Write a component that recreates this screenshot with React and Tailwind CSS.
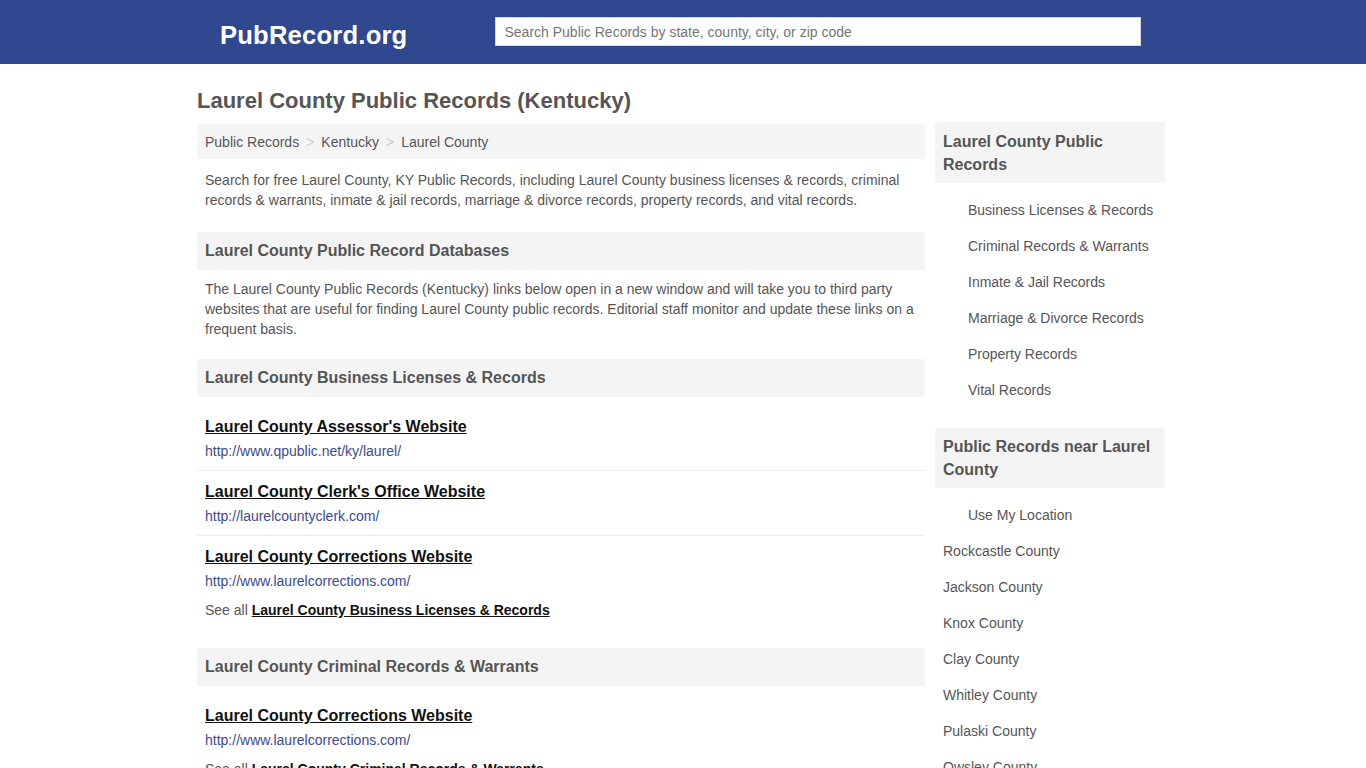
export default function App() {
  const mainLinks = [
    "Business Licenses & Records",
    "Criminal Records & Warrants",
    "Inmate & Jail Records",
    "Marriage & Divorce Records",
    "Property Records",
    "Vital Records",
  ];
  const nearby = [
    "Rockcastle County",
    "Jackson County",
    "Knox County",
    "Clay County",
    "Whitley County",
    "Pulaski County",
    "Owsley County",
  ];
  const business = [
    { title: "Laurel County Assessor's Website", url: "http://www.qpublic.net/ky/laurel/" },
    { title: "Laurel County Clerk's Office Website", url: "http://laurelcountyclerk.com/" },
    { title: "Laurel County Corrections Website", url: "http://www.laurelcorrections.com/" },
  ];
  const criminal = [
    { title: "Laurel County Corrections Website", url: "http://www.laurelcorrections.com/" },
  ];

  return (
    <div className="min-h-screen bg-white text-[#555] font-['Liberation_Sans',Arial,sans-serif]">
      {/* Header */}
      <header className="h-16 bg-[#2f4890]">
        <div className="w-[972px] mx-auto flex items-start h-full">
          <a href="#" className="ml-[23px] mt-[19px] leading-[32px] text-white font-bold text-[25.6px] tracking-[0.2px]">
            PubRecord.org
          </a>
          <input
            type="text"
            placeholder="Search Public Records by state, county, city, or zip code"
            className="ml-[88px] mt-[17px] w-[646px] h-[29px] bg-white border border-[#cfd8ec] px-2 text-[14px] text-[#555] placeholder:text-[#757575] focus:outline-none"
          />
        </div>
      </header>

      <div className="w-[972px] mx-auto">
        <h1 className="text-[22px] font-bold text-[#555] mt-[24px] leading-[26px]">
          Laurel County Public Records (Kentucky)
        </h1>

        <div className="flex gap-[10px] mt-[10px]">
          {/* Main column */}
          <div className="w-[728px]">
            <div className="bg-[#f5f5f5] rounded-[3px] h-[35px] flex items-center px-2 pt-[1px] text-[14px]">
              <a href="#" className="text-[#555]">Public Records</a>
              <span className="text-[#ccc] px-[7px]">&gt;</span>
              <a href="#" className="text-[#555]">Kentucky</a>
              <span className="text-[#ccc] px-[7px]">&gt;</span>
              <span>Laurel County</span>
            </div>

            <p className="px-2 text-[14px] leading-[20px] mt-[11px]">
              Search for free Laurel County, KY Public Records, including Laurel County business licenses &amp; records, criminal records &amp; warrants, inmate &amp; jail records, marriage &amp; divorce records, property records, and vital records.
            </p>

            <SectionHead className="mt-[22px]">Laurel County Public Record Databases</SectionHead>

            <p className="px-2 text-[14px] leading-[20px] mt-[9px]">
              The Laurel County Public Records (Kentucky) links below open in a new window and will take you to third party websites that are useful for finding Laurel County public records. Editorial staff monitor and update these links on a frequent basis.
            </p>

            <SectionHead className="mt-[20px]">Laurel County Business Licenses &amp; Records</SectionHead>
            <LinkList items={business} seeAll="Laurel County Business Licenses & Records" />

            <SectionHead className="mt-[28px]">Laurel County Criminal Records &amp; Warrants</SectionHead>
            <LinkList items={criminal} seeAll="Laurel County Criminal Records & Warrants" />
          </div>

          {/* Sidebar */}
          <aside className="w-[230px] -mt-[2px]">
            <div className="bg-[#f4f4f4] rounded-[3px] px-2 pt-[8px] pb-[7px] text-[16px] font-bold leading-[23px]">
              Laurel County Public Records
            </div>
            <ul className="mt-[9px] text-[14px]">
              {mainLinks.map((l) => (
                <li key={l} className="h-[36px] flex items-center pl-[33px]">
                  <a href="#" className="text-[#555]">{l}</a>
                </li>
              ))}
            </ul>

            <div className="mt-[20px] bg-[#f4f4f4] rounded-[3px] px-2 pt-[7px] pb-[7px] text-[16px] font-bold leading-[23px]">
              Public Records near Laurel County
            </div>
            <ul className="mt-[9px] text-[14px]">
              <li className="h-[36px] flex items-center pl-[33px]">
                <a href="#" className="text-[#555]">Use My Location</a>
              </li>
              {nearby.map((c) => (
                <li key={c} className="h-[36px] flex items-center pl-2">
                  <a href="#" className="text-[#555]">{c}</a>
                </li>
              ))}
            </ul>
          </aside>
        </div>
      </div>
    </div>
  );
}

function SectionHead({ children, className = "" }) {
  return (
    <h2 className={`bg-[#f4f4f4] rounded-[3px] h-[38px] flex items-center px-2 text-[16px] font-bold text-[#555] ${className}`}>
      {children}
    </h2>
  );
}

function LinkList({ items, seeAll }) {
  return (
    <div className="mt-[20px]">
      {items.map((it, i) => (
        <div
          key={i}
          className={`px-2 pb-[9px] ${i > 0 ? "pt-[11px]" : ""} ${i < items.length - 1 ? "border-b border-[#eee]" : ""}`}
        >
          <a href="#" className="block text-[16px] font-bold text-[#111] underline leading-[20px]">
            {it.title}
          </a>
          <a href="#" className="block text-[14px] text-[#3b4b8c] mt-[4px] leading-[20px]">
            {it.url}
          </a>
        </div>
      ))}
      <div className="px-2 text-[14px] leading-[20px]">
        See all{" "}
        <a href="#" className="font-bold text-[#111] underline">{seeAll}</a>
      </div>
    </div>
  );
}
